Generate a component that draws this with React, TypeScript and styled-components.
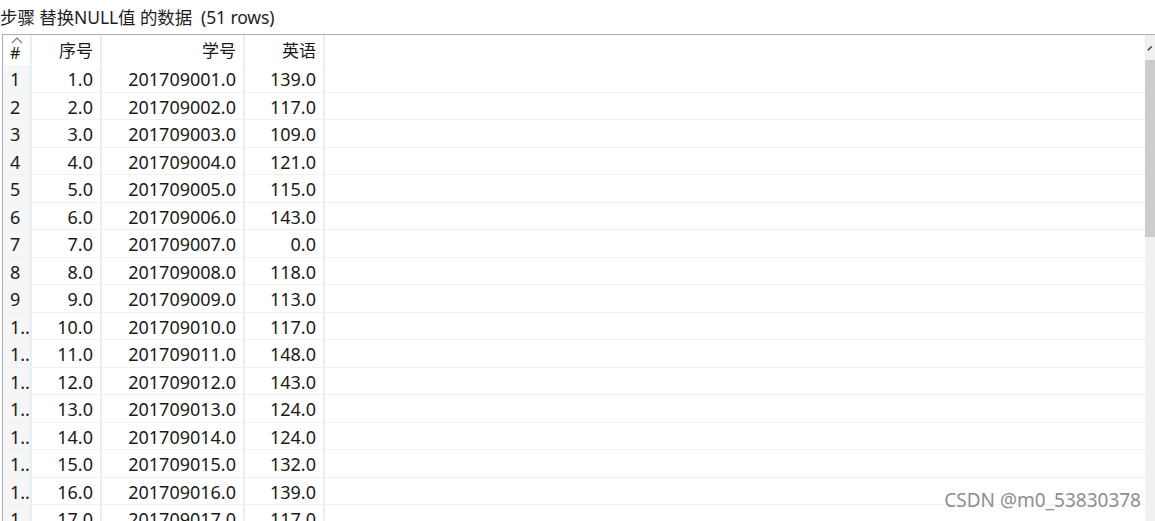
import React from 'react';
import styled, { createGlobalStyle } from 'styled-components';

const GlobalStyle = createGlobalStyle`
  html, body {
    margin: 0;
    padding: 0;
    background: #ffffff;
    overflow: hidden;
  }
  body {
    font-family: "Noto Sans", "Noto Sans CJK SC", sans-serif;
    color: #222;
  }
`;

const Page = styled.div`
  width: 1155px;
  height: 521px;
  position: relative;
  overflow: hidden;
  background: #fff;
`;

const Caption = styled.div`
  height: 34px;
  padding-left: 0;
  display: flex;
  align-items: center;
  font-size: 17.5px;
  letter-spacing: -0.1px;
  color: #1e1e1e;
  white-space: pre;
  padding-bottom: 1px;
  box-sizing: border-box;
`;

const Frame = styled.div`
  display: flex;
  margin-left: 2px;
  border-top: 1px solid #a9afb5;
  border-left: 1px solid #a9afb5;
  height: 487px;
`;

const Grid = styled.div`
  flex: 1;
  overflow: hidden;
`;

const Row = styled.div<{ $header?: boolean }>`
  display: flex;
  height: ${(p) => (p.$header ? '30px' : '27.5px')};
  box-sizing: border-box;
  border-bottom: 1px solid ${(p) => (p.$header ? 'transparent' : '#eff1f3')};
`;

const Cell = styled.div<{ $w: number; $index?: boolean; $header?: boolean }>`
  width: ${(p) => p.$w}px;
  flex: 0 0 auto;
  box-sizing: border-box;
  border-right: 2px solid #e9eef3;
  background: ${(p) => (p.$index && !p.$header ? '#f6f6f6' : '#fff')};
  display: flex;
  align-items: center;
  justify-content: ${(p) => (p.$index ? 'flex-start' : 'flex-end')};
  padding: ${(p) => (p.$index ? '2px 0 0 7px' : '2px 7px 0 0')};
  font-size: 18px;
  color: #1a1a1a;
  white-space: nowrap;
  overflow: hidden;
  position: relative;
`;

const HeaderText = styled.span`
  font-family: "Noto Sans CJK SC", sans-serif;
  font-size: 17px;
  margin-top: -2px;
`;

const Hash = styled.span`
  font-size: 16px;
  padding-top: 4px;
`;

const SortMark = styled.svg`
  position: absolute;
  left: 8px;
  top: 2px;
`;

const Filler = styled.div`
  flex: 1;
`;

const ScrollBar = styled.div`
  width: 10px;
  background: #f0f0f0;
  display: flex;
  flex-direction: column;
`;

const ScrollArrow = styled.div`
  height: 25px;
  display: flex;
  align-items: center;
  justify-content: flex-start;
  padding-left: 2px;
`;

const ScrollThumb = styled.div`
  height: 177px;
  background: #cdcdcd;
`;

const Watermark = styled.div`
  position: absolute;
  right: 14px;
  bottom: 8px;
  font-size: 19px;
  color: #8e8e8e;
`;

const widths = [29, 70, 143, 80];

const scores = [139, 117, 109, 121, 115, 143, 0, 118, 113, 117, 148, 143, 124, 124, 132, 139, 117];

const App: React.FC = () => {
  const rows = scores.map((s, i) => {
    const n = i + 1;
    return {
      idx: n < 10 ? String(n) : '1..',
      seq: `${n}.0`,
      id: `2017090${String(n).padStart(2, '0')}.0`,
      score: `${s}.0`,
    };
  });

  return (
    <Page>
      <GlobalStyle />
      <Caption>{'步骤 替换NULL值 的数据  (51 rows)'}</Caption>
      <Frame>
        <Grid>
          <Row $header>
            <Cell $w={widths[0]} $index $header>
              <SortMark width="12" height="7" viewBox="0 0 12 7">
                <path d="M1 6 L6 1 L11 6" fill="none" stroke="#7a7a7a" strokeWidth="1.2" />
              </SortMark>
              <Hash>#</Hash>
            </Cell>
            <Cell $w={widths[1]}><HeaderText>序号</HeaderText></Cell>
            <Cell $w={widths[2]}><HeaderText>学号</HeaderText></Cell>
            <Cell $w={widths[3]}><HeaderText>英语</HeaderText></Cell>
            <Filler />
          </Row>
          {rows.map((r) => (
            <Row key={r.seq}>
              <Cell $w={widths[0]} $index>{r.idx}</Cell>
              <Cell $w={widths[1]}>{r.seq}</Cell>
              <Cell $w={widths[2]}>{r.id}</Cell>
              <Cell $w={widths[3]}>{r.score}</Cell>
              <Filler />
            </Row>
          ))}
        </Grid>
        <ScrollBar>
          <ScrollArrow>
            <svg width="10" height="8" viewBox="0 0 10 8">
              <path d="M1 7 L6 2" fill="none" stroke="#555" strokeWidth="2" />
            </svg>
          </ScrollArrow>
          <ScrollThumb />
        </ScrollBar>
      </Frame>
      <Watermark>CSDN @m0_53830378</Watermark>
    </Page>
  );
};

export default App;
